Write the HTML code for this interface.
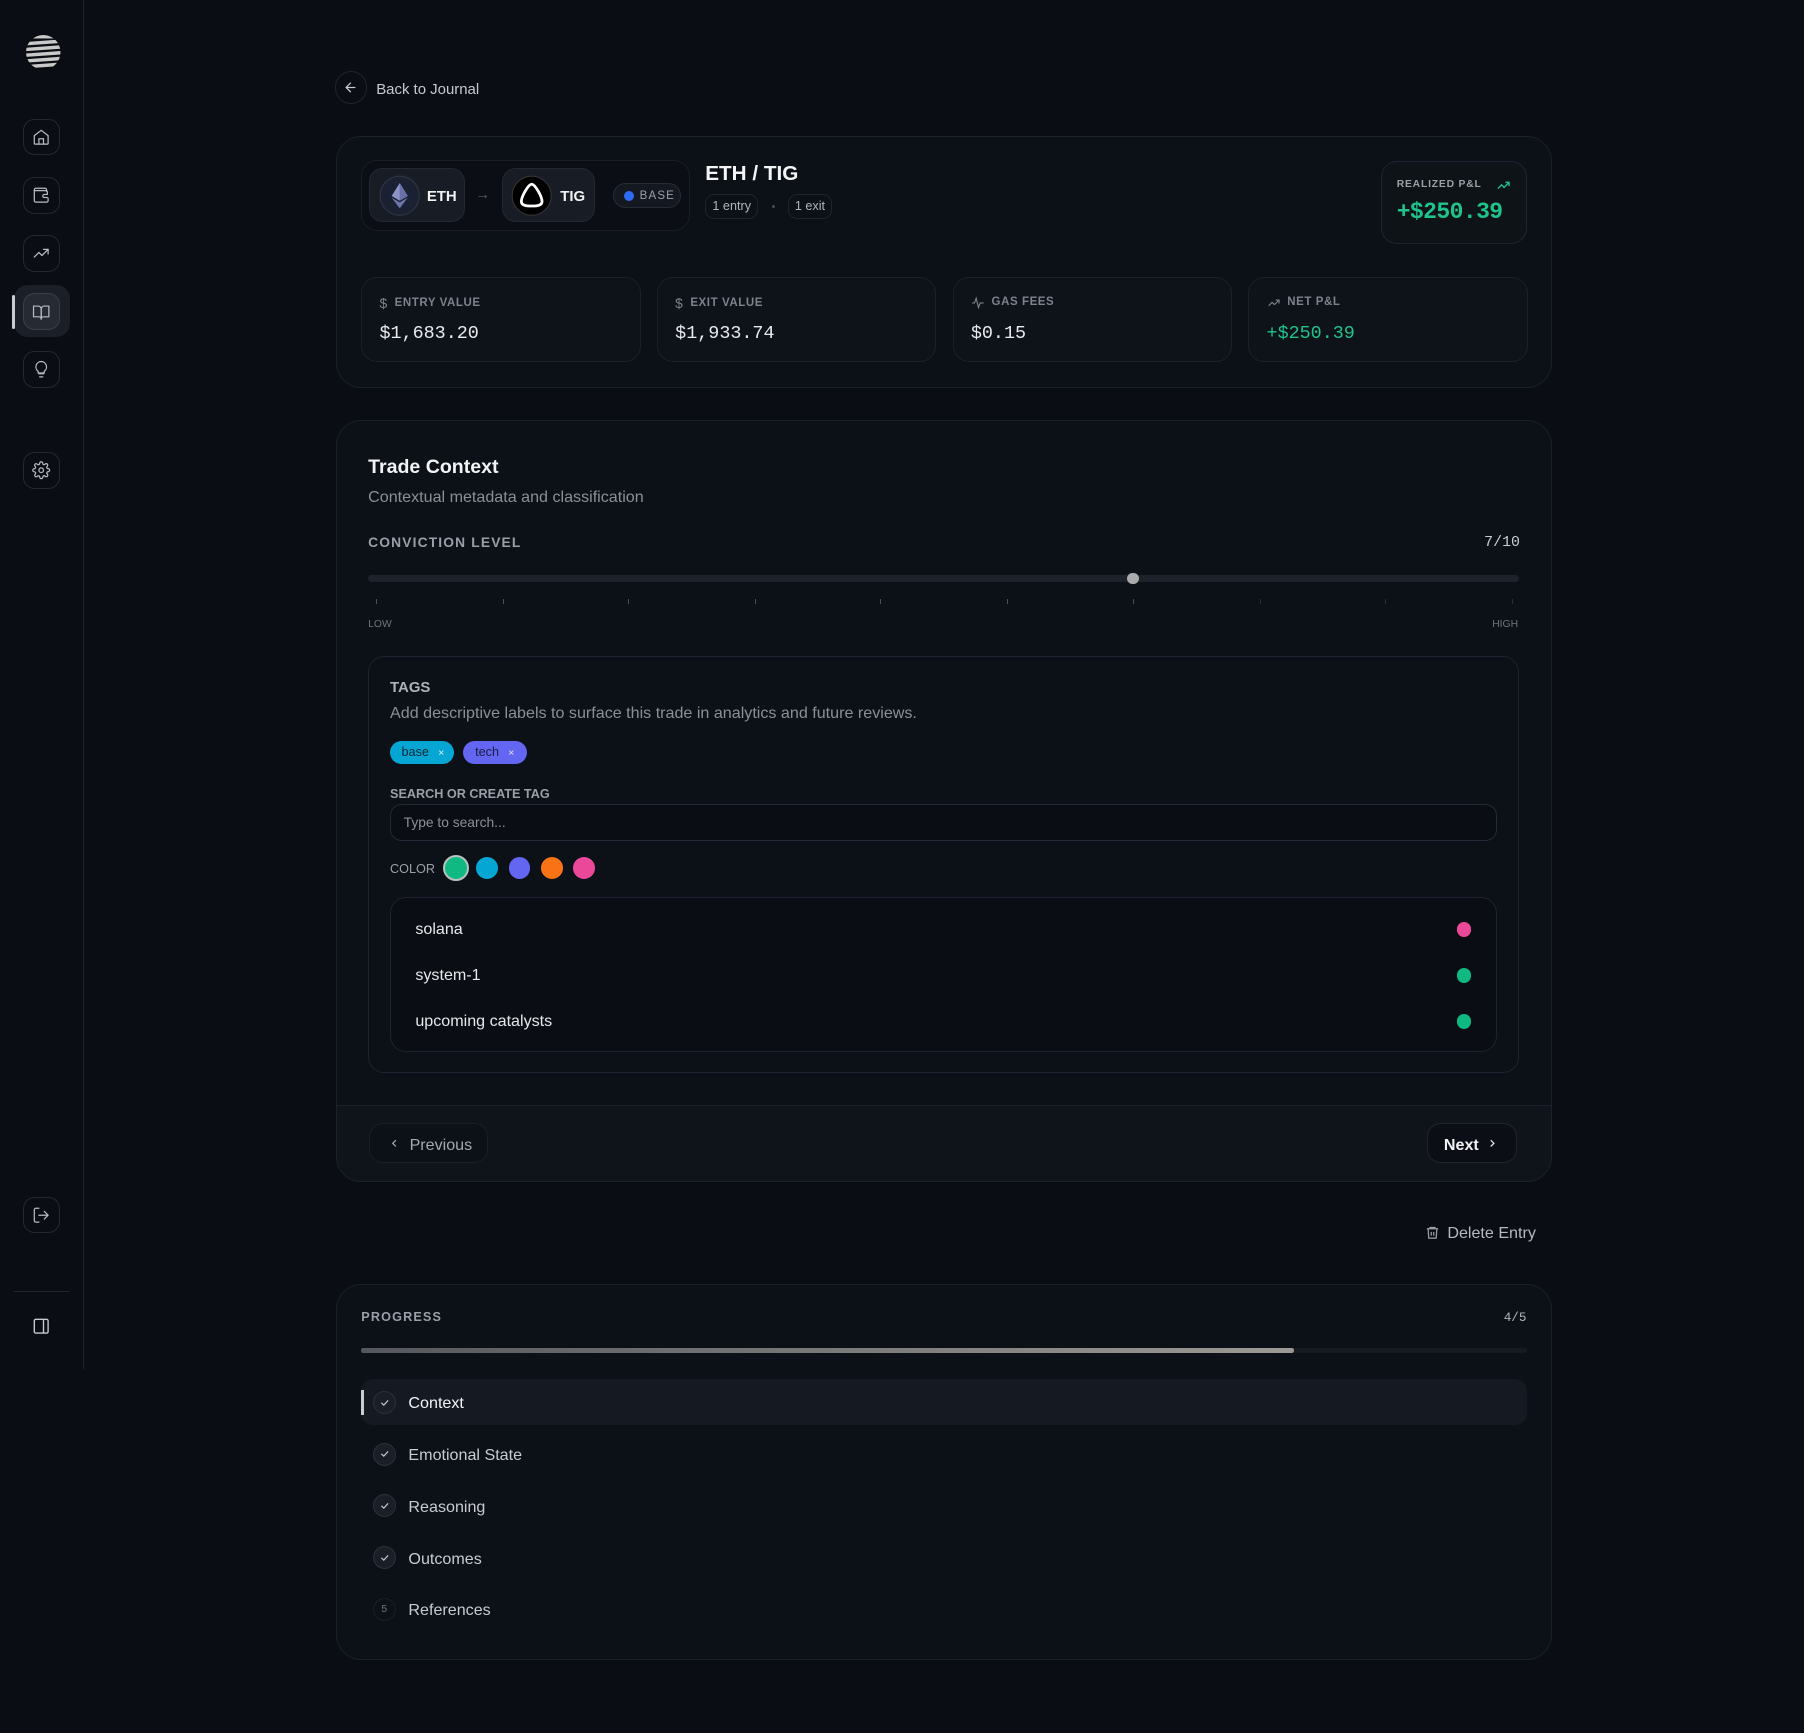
<!DOCTYPE html>
<html><head><meta charset="utf-8">
<style>
html,body{margin:0;padding:0;background:#0a0d13;}
body{width:1804px;height:1732px;overflow:hidden;}
#root{zoom:1.1505;width:1568px;height:1506px;position:relative;font-family:"Liberation Sans",sans-serif;color:#e8eaee;}
.a{position:absolute;}
.mono{font-family:"Liberation Mono",monospace;}
.card{position:absolute;background:#0c1017;border:1px solid #1b212c;border-radius:22px;box-sizing:border-box;}
.ib{position:absolute;left:20px;width:32px;height:32px;border:1px solid #222834;border-radius:10px;box-sizing:border-box;display:flex;align-items:center;justify-content:center;}
.ib svg{width:16px;height:16px;fill:none;stroke:#b8bcc4;stroke-width:1.6;stroke-linecap:round;stroke-linejoin:round;}
.stat{position:absolute;top:241px;width:243px;height:74px;border:1px solid #1b212c;border-radius:14px;background:#0e1219;box-sizing:border-box;}
.stat .l{position:absolute;left:15px;top:15px;font-size:10px;color:#7d828c;letter-spacing:.5px;font-weight:bold;display:flex;align-items:center;gap:6px;}
.stat .v{position:absolute;left:15px;top:39px;font-size:16px;}
.lab{font-size:12px;color:#9a9fa8;letter-spacing:1px;font-weight:bold;}
.tick{position:absolute;top:521px;width:1px;height:4px;background:#4a4f58;}
.sw{position:absolute;top:745px;width:19px;height:19px;border-radius:50%;}
.item{position:absolute;left:361px;font-size:14px;color:#e6e8ec;}
.dot{position:absolute;left:1266px;width:13px;height:13px;border-radius:50%;}
.step{position:absolute;left:324px;width:20px;height:20px;border-radius:50%;border:1px solid #2c313b;background:#1a1e26;box-sizing:border-box;display:flex;align-items:center;justify-content:center;}
.st{position:absolute;left:355px;font-size:14px;color:#c8ccd2;}
</style></head><body><div id="root">

<div class="a" style="left:72px;top:0;width:1px;height:1190px;background:#1e2430"></div>
<svg class="a" style="left:23px;top:30px" width="30" height="30" viewBox="0 0 30 30">
<defs><clipPath id="c"><circle cx="15" cy="15" r="15"/></clipPath></defs>
<g clip-path="url(#c)" fill="#c9c9c9">
<rect x="0" y="0" width="30" height="3"/><rect x="0" y="5" width="30" height="3" transform="rotate(-4 15 6)"/><rect x="0" y="10" width="30" height="3" transform="rotate(-4 15 11)"/><rect x="0" y="15" width="30" height="3" transform="rotate(-4 15 16)"/><rect x="0" y="20" width="30" height="3" transform="rotate(-4 15 21)"/><rect x="0" y="25" width="30" height="3" transform="rotate(-4 15 26)"/></g></svg>

<div class="ib" style="top:103px"><svg viewBox="0 0 24 24"><path d="M3 10l9-7 9 7v10a1 1 0 0 1-1 1H4a1 1 0 0 1-1-1z"/><path d="M9 21v-7h6v7"/></svg></div>
<div class="ib" style="top:154px"><svg viewBox="0 0 24 24"><path d="M19 7V5a2 2 0 0 0-2-2H5a2 2 0 0 0-2 2v14a2 2 0 0 0 2 2h14a2 2 0 0 0 2-2v-3"/><path d="M3 6h15a2 2 0 0 1 2 2v3h-4a2 2 0 0 0 0 4h4"/></svg></div>
<div class="ib" style="top:204px"><svg viewBox="0 0 24 24"><path d="M3 17l6-6 4 4 8-8"/><path d="M15 7h6v6"/></svg></div>
<div class="a" style="left:12px;top:248px;width:49px;height:45px;border-radius:12px;background:#1b1f27"></div>
<div class="a" style="left:10px;top:256px;width:3px;height:30px;border-radius:2px;background:#c9ccd2"></div>
<div class="ib" style="top:255px;background:#262a33;border-color:#3a3f49"><svg viewBox="0 0 24 24"><path d="M2 4h6a4 4 0 0 1 4 4v13a3 3 0 0 0-3-3H2z"/><path d="M22 4h-6a4 4 0 0 0-4 4v13a3 3 0 0 1 3-3h7z"/></svg></div>
<div class="ib" style="top:305px"><svg viewBox="0 0 24 24"><path d="M9 18h6M10 22h4"/><path d="M12 2a7 7 0 0 0-4 12.7V17h8v-2.3A7 7 0 0 0 12 2z"/></svg></div>
<div class="ib" style="top:393px"><svg viewBox="0 0 24 24"><circle cx="12" cy="12" r="3"/><path d="M19.4 15a1.7 1.7 0 0 0 .3 1.8l.1.1a2 2 0 1 1-2.8 2.8l-.1-.1a1.7 1.7 0 0 0-1.8-.3 1.7 1.7 0 0 0-1 1.5V21a2 2 0 1 1-4 0v-.1a1.7 1.7 0 0 0-1.1-1.5 1.7 1.7 0 0 0-1.8.3l-.1.1a2 2 0 1 1-2.8-2.8l.1-.1a1.7 1.7 0 0 0 .3-1.8 1.7 1.7 0 0 0-1.5-1H3a2 2 0 1 1 0-4h.1a1.7 1.7 0 0 0 1.5-1.1 1.7 1.7 0 0 0-.3-1.8l-.1-.1a2 2 0 1 1 2.8-2.8l.1.1a1.7 1.7 0 0 0 1.8.3H9a1.7 1.7 0 0 0 1-1.5V3a2 2 0 1 1 4 0v.1a1.7 1.7 0 0 0 1 1.5 1.7 1.7 0 0 0 1.8-.3l.1-.1a2 2 0 1 1 2.8 2.8l-.1.1a1.7 1.7 0 0 0-.3 1.8V9a1.7 1.7 0 0 0 1.5 1H21a2 2 0 1 1 0 4h-.1a1.7 1.7 0 0 0-1.5 1z"/></svg></div>
<div class="ib" style="top:1040px"><svg viewBox="0 0 24 24"><path d="M9 21H5a2 2 0 0 1-2-2V5a2 2 0 0 1 2-2h4"/><path d="M16 17l5-5-5-5M21 12H9"/></svg></div>
<div class="a" style="left:12px;top:1122px;width:49px;height:1px;background:#1e2430"></div>
<svg class="a" style="left:28px;top:1145px" width="16" height="16" viewBox="0 0 24 24" fill="none" stroke="#c8ccd2" stroke-width="1.8"><rect x="3" y="3" width="18" height="18" rx="2"/><path d="M15 3v18"/></svg>

<div class="a" style="left:291px;top:62px;width:28px;height:28px;border:1px solid #1e2430;border-radius:50%;box-sizing:border-box;display:flex;align-items:center;justify-content:center"><svg width="13" height="13" viewBox="0 0 24 24" fill="none" stroke="#c8ccd2" stroke-width="2" stroke-linecap="round"><path d="M19 12H5M12 19l-7-7 7-7"/></svg></div>
<div class="a" style="left:327px;top:70px;font-size:13px;color:#c6cad0">Back to Journal</div>

<div class="card" style="left:292px;top:118px;width:1057px;height:219px"></div>
<div class="a" style="left:314px;top:139px;width:286px;height:62px;border:1px solid #181d27;border-radius:14px;box-sizing:border-box;background:#0b0f15"></div>
<div class="a" style="left:321px;top:146px;width:83px;height:47px;border:1px solid #232833;border-radius:12px;background:#181c24;box-sizing:border-box"></div>
<svg class="a" style="left:329px;top:152px" width="36" height="36" viewBox="0 0 36 36"><circle cx="18" cy="18" r="17" fill="#1b2133" stroke="#2e3545"/><path d="M18 7l-7 11.3 7 4.1 7-4.1z" fill="#8c93c7"/><path d="M18 23.8l-7-4.1L18 29l7-9.3z" fill="#6e75aa"/><path d="M18 7v15.4l7-4.1z" fill="#6a71a6"/></svg>
<div class="a" style="left:371px;top:163px;font-size:13px;font-weight:bold;color:#f0f1f3">ETH</div>
<div class="a" style="left:413px;top:162px;font-size:13px;color:#5a5f68">→</div>
<div class="a" style="left:436px;top:146px;width:81px;height:47px;border:1px solid #232833;border-radius:12px;background:#181c24;box-sizing:border-box"></div>
<svg class="a" style="left:444px;top:152px" width="36" height="36" viewBox="0 0 36 36"><circle cx="18" cy="18" r="17" fill="#000" stroke="#333"/><path d="M18 8c-3 0-9 11-9 15 0 3 3 4 9 4s9-1 9-4c0-4-6-15-9-15z" fill="none" stroke="#fff" stroke-width="2.4"/></svg>
<div class="a" style="left:487px;top:163px;font-size:13px;font-weight:bold;color:#f0f1f3">TIG</div>
<div class="a" style="left:533px;top:159px;width:59px;height:22px;border:1px solid #262b35;border-radius:11px;background:#141820;box-sizing:border-box"></div>
<div class="a" style="left:542px;top:166px;width:9px;height:9px;border-radius:50%;background:#2f6bf0"></div>
<div class="a" style="left:556px;top:165px;font-size:10px;color:#9aa0a8;letter-spacing:1px">BASE</div>
<div class="a" style="left:613px;top:141px;font-size:18px;font-weight:bold;color:#f4f5f7">ETH / TIG</div>
<div class="a" style="left:613px;top:169px;width:46px;height:21px;border:1px solid #1f2430;border-radius:8px;box-sizing:border-box;font-size:11px;color:#b0b4bb;text-align:center;line-height:20px">1 entry</div>
<div class="a" style="left:671px;top:178px;width:3px;height:3px;border-radius:50%;background:#454a53"></div>
<div class="a" style="left:685px;top:169px;width:38px;height:21px;border:1px solid #1f2430;border-radius:8px;box-sizing:border-box;font-size:11px;color:#b0b4bb;text-align:center;line-height:20px">1 exit</div>
<div class="a" style="left:1200px;top:140px;width:127px;height:72px;border:1px solid #1f2530;border-radius:14px;background:#0e1318;box-sizing:border-box"></div>
<div class="a" style="left:1214px;top:156px;font-size:9px;color:#9aa0a8;font-weight:bold;letter-spacing:.7px">REALIZED P&amp;L</div>
<svg class="a" style="left:1300px;top:155px" width="13" height="13" viewBox="0 0 24 24" fill="none" stroke="#1fbf86" stroke-width="2.2"><path d="M3 17l6-6 4 4 8-8M15 7h6v6"/></svg>
<div class="a mono" style="left:1214px;top:173px;font-size:20px;font-weight:bold;color:#1fc48a;letter-spacing:-0.5px">+$250.39</div>

<div class="stat" style="left:314px"><div class="l"><span style="font-size:12px;font-weight:normal">$</span>ENTRY VALUE</div><div class="v mono">$1,683.20</div></div>
<div class="stat" style="left:571px"><div class="l"><span style="font-size:12px;font-weight:normal">$</span>EXIT VALUE</div><div class="v mono">$1,933.74</div></div>
<div class="stat" style="left:828px"><div class="l"><svg width="12" height="12" viewBox="0 0 24 24" fill="none" stroke="#7d828c" stroke-width="2"><path d="M2 12h4l3-8 4 16 3-8h6"/></svg>GAS FEES</div><div class="v mono">$0.15</div></div>
<div class="stat" style="left:1085px"><div class="l"><svg width="12" height="12" viewBox="0 0 24 24" fill="none" stroke="#7d828c" stroke-width="2"><path d="M3 17l6-6 4 4 8-8M15 7h6v6"/></svg>NET P&amp;L</div><div class="v mono" style="color:#1fc48a">+$250.39</div></div>

<div class="card" style="left:292px;top:365px;width:1057px;height:662px;overflow:hidden"><div class="a" style="left:0;top:595px;width:100%;height:67px;background:#0f141b;border-top:1px solid #1b212c"></div></div>
<div class="a" style="left:320px;top:396px;font-size:17px;font-weight:bold;color:#f2f3f5">Trade Context</div>
<div class="a" style="left:320px;top:424px;font-size:14px;color:#8a8f98">Contextual metadata and classification</div>
<div class="a lab" style="left:320px;top:465px;font-weight:bold">CONVICTION LEVEL</div>
<div class="a mono" style="left:1290px;top:465px;font-size:13px;color:#c8ccd2">7/10</div>
<div class="a" style="left:320px;top:500px;width:1000px;height:6px;border-radius:3px;background:#1e222a"></div>
<div class="a" style="left:980px;top:498px;width:10px;height:10px;border-radius:50%;background:#a9aaab"></div>
<div class="tick" style="left:327px"></div><div class="tick" style="left:437px"></div><div class="tick" style="left:546px"></div><div class="tick" style="left:656px"></div><div class="tick" style="left:765px"></div><div class="tick" style="left:875px"></div><div class="tick" style="left:985px"></div><div class="tick" style="left:1095px;background:#2a2e36"></div><div class="tick" style="left:1204px;background:#2a2e36"></div><div class="tick" style="left:1314px;background:#2a2e36"></div>
<div class="a" style="left:320px;top:538px;font-size:9px;color:#6f747d">LOW</div>
<div class="a" style="left:1297px;top:538px;font-size:9px;color:#6f747d">HIGH</div>

<div class="a" style="left:320px;top:570px;width:1000px;height:363px;border:1px solid #1d2330;border-radius:14px;box-sizing:border-box"></div>
<div class="a" style="left:339px;top:590px;font-size:13px;font-weight:bold;color:#aeb2b9">TAGS</div>
<div class="a" style="left:339px;top:612px;font-size:14px;color:#8a8f98">Add descriptive labels to surface this trade in analytics and future reviews.</div>
<div class="a" style="left:339px;top:644px;width:56px;height:20px;border-radius:10px;background:#06a6d4;font-size:11px;color:#0a2a35;line-height:20px;box-sizing:border-box;padding-left:10px">base <span style="font-size:9px;margin-left:5px;color:#e0f5fb">×</span></div>
<div class="a" style="left:402px;top:644px;width:56px;height:20px;border-radius:10px;background:#6366f1;font-size:11px;color:#1a1b45;line-height:20px;box-sizing:border-box;padding-left:11px">tech <span style="font-size:9px;margin-left:5px;color:#e5e6ff">×</span></div>
<div class="a" style="left:339px;top:684px;font-size:11px;font-weight:bold;color:#9a9fa8">SEARCH OR CREATE TAG</div>
<div class="a" style="left:339px;top:699px;width:962px;height:32px;border:1px solid #232936;border-radius:10px;box-sizing:border-box;background:#0a0d13;font-size:12px;color:#8a8f98;line-height:31px;padding-left:11px">Type to search...</div>
<div class="a" style="left:339px;top:749px;font-size:11px;color:#9a9fa8">COLOR</div>
<div class="sw" style="left:385px;top:743px;width:23px;height:23px;background:#10b981;border:2px solid #b9c2bf;box-sizing:border-box"></div>
<div class="sw" style="left:414px;background:#06a6d4"></div>
<div class="sw" style="left:442px;background:#6366f1"></div>
<div class="sw" style="left:470px;background:#f97316"></div>
<div class="sw" style="left:498px;background:#ec4899"></div>
<div class="a" style="left:339px;top:780px;width:962px;height:134px;border:1px solid #1d2330;border-radius:14px;box-sizing:border-box;background:#0a0d13"></div>
<div class="item" style="top:800px">solana</div><div class="dot" style="top:801px;background:#ec4899"></div>
<div class="item" style="top:840px">system-1</div><div class="dot" style="top:841px;background:#10b981"></div>
<div class="item" style="top:880px">upcoming catalysts</div><div class="dot" style="top:881px;background:#10b981"></div>

<div class="a" style="left:321px;top:976px;width:103px;height:35px;border:1px solid #191e28;border-radius:12px;box-sizing:border-box;background:#0c1017"></div>
<svg class="a" style="left:337px;top:988px" width="11" height="11" viewBox="0 0 24 24" fill="none" stroke="#a4a9b0" stroke-width="2.4"><path d="M15 18l-6-6 6-6"/></svg>
<div class="a" style="left:356px;top:987px;font-size:14px;color:#a4a9b0">Previous</div>
<div class="a" style="left:1240px;top:976px;width:79px;height:35px;border:1px solid #1f2430;border-radius:12px;box-sizing:border-box;background:#0b0e14"></div>
<div class="a" style="left:1255px;top:987px;font-size:14px;color:#f2f3f5;font-weight:bold">Next</div>
<svg class="a" style="left:1292px;top:988px" width="11" height="11" viewBox="0 0 24 24" fill="none" stroke="#e6e8ec" stroke-width="2.4"><path d="M9 18l6-6-6-6"/></svg>

<svg class="a" style="left:1239px;top:1065px" width="13" height="13" viewBox="0 0 24 24" fill="none" stroke="#9ca1a8" stroke-width="2"><path d="M3 6h18M8 6V4h8v2M5 6l1 15h12l1-15M10 11v6M14 11v6"/></svg>
<div class="a" style="left:1258px;top:1064px;font-size:14px;color:#b5b9c0">Delete Entry</div>

<div class="card" style="left:292px;top:1116px;width:1057px;height:327px"></div>
<div class="a lab" style="left:314px;top:1139px;font-size:11px">PROGRESS</div>
<div class="a mono" style="left:1307px;top:1139px;font-size:11px;color:#b0b4bb">4/5</div>
<div class="a" style="left:314px;top:1172px;width:1013px;height:4px;border-radius:2px;background:#161a21"></div>
<div class="a" style="left:314px;top:1172px;width:811px;height:4px;border-radius:2px;background:linear-gradient(90deg,#55585d,#9d9a95)"></div>
<div class="a" style="left:314px;top:1199px;width:1013px;height:40px;border-radius:10px;background:#151922"></div>
<div class="a" style="left:314px;top:1208px;width:2px;height:22px;background:#c9ccd2"></div>
<div class="step" style="top:1209px"><svg width="10" height="10" viewBox="0 0 24 24" fill="none" stroke="#c8ccd2" stroke-width="2.5"><path d="M5 12l5 5 9-10"/></svg></div>
<div class="st" style="top:1212px;color:#f2f3f5">Context</div>
<div class="step" style="top:1254px"><svg width="10" height="10" viewBox="0 0 24 24" fill="none" stroke="#c8ccd2" stroke-width="2.5"><path d="M5 12l5 5 9-10"/></svg></div>
<div class="st" style="top:1257px">Emotional State</div>
<div class="step" style="top:1299px"><svg width="10" height="10" viewBox="0 0 24 24" fill="none" stroke="#c8ccd2" stroke-width="2.5"><path d="M5 12l5 5 9-10"/></svg></div>
<div class="st" style="top:1302px">Reasoning</div>
<div class="step" style="top:1344px"><svg width="10" height="10" viewBox="0 0 24 24" fill="none" stroke="#c8ccd2" stroke-width="2.5"><path d="M5 12l5 5 9-10"/></svg></div>
<div class="st" style="top:1347px">Outcomes</div>
<div class="step" style="top:1389px;background:transparent;border-color:#1b1f28;font-size:9px;color:#6f747d">5</div>
<div class="st" style="top:1392px">References</div>

</div></body></html>
